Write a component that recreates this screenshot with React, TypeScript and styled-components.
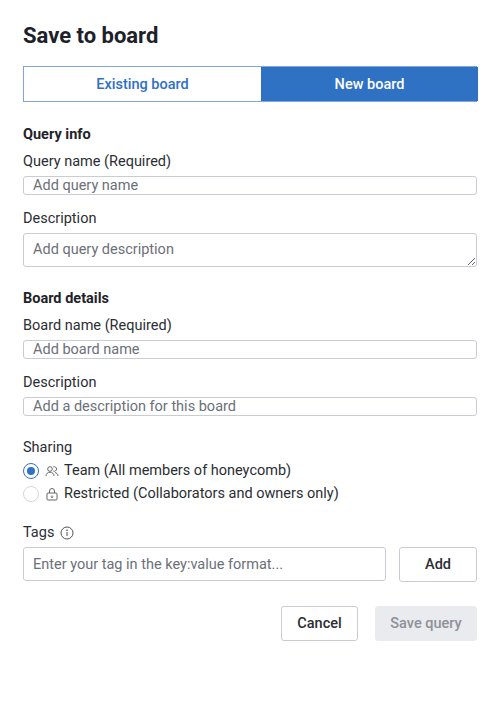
import React, { useState } from 'react';
import styled, { createGlobalStyle } from 'styled-components';

const Global = createGlobalStyle`
  body { margin: 0; background: #fff; font-family: Roboto, "Liberation Sans", sans-serif; color: #1f2329; }
  * { box-sizing: border-box; }
`;

const Page = styled.div`
  width: 500px;
  padding: 22px 23px 0 23px;
  display: flex;
  flex-direction: column;
`;

const Title = styled.h1`
  margin: 0 0 16px;
  font-size: 22px;
  font-weight: 700;
  line-height: 28px;
  color: #1d2129;
`;

const Tabs = styled.div`
  display: flex;
  height: 36px;
  border: 1px solid #7fa6e0;
`;

const Tab = styled.button<{ $active?: boolean; $w: number }>`
  flex: 0 0 ${p => p.$w}px;
  border: none;
  font-family: inherit;
  font-size: 14.5px;
  font-weight: 500;
  background: ${p => (p.$active ? '#2f72c4' : '#fff')};
  color: ${p => (p.$active ? '#fff' : '#2f6fc7')};
`;

const SectionTitle = styled.div<{ $top: number }>`
  margin-top: ${p => p.$top}px;
  font-size: 14.5px;
  font-weight: 700;
  line-height: 18px;
`;

const Label = styled.div<{ $top?: number }>`
  margin-top: ${p => p.$top ?? 10}px;
  margin-bottom: 5px;
  font-size: 14.5px;
  line-height: 18px;
  color: #2a2e33;
  display: flex;
  align-items: center;
  gap: 6px;
`;

const Input = styled.input`
  flex: 1;
  width: 100%;
  height: 34px;
  border: 1px solid #c9ccd3;
  border-radius: 3px;
  padding: 0 9px;
  font-family: inherit;
  font-size: 14.5px;
  &::placeholder { color: #6b7079; }
`;

const Area = styled.textarea`
  width: 100%;
  height: 34px;
  min-height: 34px;
  border: 1px solid #c9ccd3;
  border-radius: 3px;
  padding: 7px 9px;
  font-family: inherit;
  font-size: 14.5px;
  line-height: 18px;
  display: block;
  &::placeholder { color: #6b7079; }
`;

const Radios = styled.div`
  display: flex;
  flex-direction: column;
  gap: 5px;
`;

const RadioRow = styled.label`
  display: flex;
  align-items: center;
  gap: 5px;
  font-size: 14.5px;
  line-height: 18px;
  color: #2a2e33;
`;

const Dot = styled.span<{ $on?: boolean }>`
  width: 16px;
  height: 16px;
  border-radius: 50%;
  border: 1px solid ${p => (p.$on ? '#2f72c4' : '#d3d6db')};
  display: flex;
  align-items: center;
  justify-content: center;
  margin-right: 1px;
  &::after {
    content: '';
    width: 8px;
    height: 8px;
    border-radius: 50%;
    background: ${p => (p.$on ? '#2f72c4' : 'transparent')};
  }
`;

const TagRow = styled.div`
  display: flex;
  gap: 13px;
`;

const Button = styled.button<{ $primary?: boolean; $w: number }>`
  flex: 0 0 ${p => p.$w}px;
  height: 35px;
  border-radius: 3px;
  font-family: inherit;
  font-size: 14.5px;
  font-weight: 500;
  background: ${p => (p.$primary ? '#e9ebee' : '#fff')};
  border: 1px solid ${p => (p.$primary ? '#e9ebee' : '#c9ccd3')};
  color: ${p => (p.$primary ? '#8d9198' : '#2a2e33')};
`;

const Footer = styled.div`
  display: flex;
  justify-content: flex-end;
  gap: 17px;
  margin-top: 24px;
`;

const Icon = ({ kind }: { kind: 'team' | 'lock' | 'info' }) => {
  if (kind === 'team')
    return (
      <svg width="14" height="14" viewBox="0 0 14 14" fill="none" stroke="#666" strokeWidth="1">
        <circle cx="5" cy="5" r="2.3" />
        <path d="M1 12c0-2.3 1.8-3.8 4-3.8s4 1.5 4 3.8" />
        <path d="M8.3 2.9a2.3 2.3 0 1 1 0 4.2M10 8.5c1.7.4 3 1.7 3 3.5" />
      </svg>
    );
  if (kind === 'lock')
    return (
      <svg width="14" height="14" viewBox="0 0 14 14" fill="none" stroke="#666" strokeWidth="1">
        <rect x="2" y="6" width="10" height="7" rx="1" />
        <path d="M4.5 6V4a2.5 2.5 0 0 1 5 0v2" />
        <path d="M7 8.5v2M6 9.7l1 1 1-1" />
      </svg>
    );
  return (
    <svg width="14" height="14" viewBox="0 0 14 14" fill="none" stroke="#555" strokeWidth="1">
      <circle cx="7" cy="7" r="6" />
      <path d="M7 6v4" />
      <circle cx="7" cy="4.2" r="0.4" fill="#555" />
    </svg>
  );
};

export default function App() {
  const [tab, setTab] = useState('new');
  const [share, setShare] = useState('team');
  return (
    <Page>
      <Global />
      <Title>Save to board</Title>
      <Tabs>
        <Tab $w={237} $active={tab === 'existing'} onClick={() => setTab('existing')}>Existing board</Tab>
        <Tab $w={217} $active={tab === 'new'} onClick={() => setTab('new')}>New board</Tab>
      </Tabs>

      <SectionTitle $top={24}>Query info</SectionTitle>
      <Label $top={9}>Query name (Required)</Label>
      <Input placeholder="Add query name" />
      <Label $top={15}>Description</Label>
      <Area placeholder="Add query description" />

      <SectionTitle $top={23}>Board details</SectionTitle>
      <Label $top={9}>Board name (Required)</Label>
      <Input placeholder="Add board name" />
      <Label $top={15}>Description</Label>
      <Input placeholder="Add a description for this board" />

      <Label $top={23}>Sharing</Label>
      <Radios>
        <RadioRow onClick={() => setShare('team')}>
          <Dot $on={share === 'team'} /> <Icon kind="team" /> Team (All members of honeycomb)
        </RadioRow>
        <RadioRow onClick={() => setShare('restricted')}>
          <Dot $on={share === 'restricted'} /> <Icon kind="lock" /> Restricted (Collaborators and owners only)
        </RadioRow>
      </Radios>

      <Label $top={21}>Tags <Icon kind="info" /></Label>
      <TagRow>
        <Input placeholder="Enter your tag in the key:value format..." />
        <Button $w={78}>Add</Button>
      </TagRow>

      <Footer>
        <Button $w={77}>Cancel</Button>
        <Button $w={102} $primary>Save query</Button>
      </Footer>
    </Page>
  );
}
